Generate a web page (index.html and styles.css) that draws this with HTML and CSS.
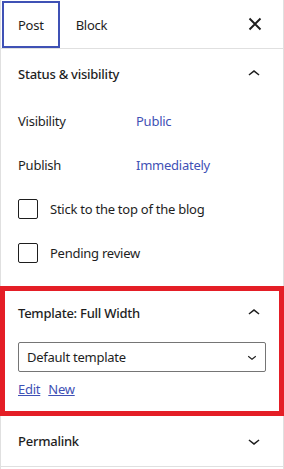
FILE: index.html
```
<!DOCTYPE html>
<html>
<head>
    <title>Post settings</title>
    <meta http-equiv="Content-Type" content="text/html; charset=utf-8"/>
    <link rel="stylesheet" href="styles.css">
</head>
<body>
<div id="sidebar">
    <div class="tabs">
        <button class="tab active">Post</button>
        <button class="tab">Block</button>
        <button class="close" aria-label="Close settings">
            <svg width="24" height="24" viewBox="0 0 24 24"><path d="M6.5 6.5l11 11M17.5 6.5l-11 11" stroke="#1e1e1e" stroke-width="1.9" fill="none"/></svg>
        </button>
    </div>

    <div class="panel">
        <div class="panelHeader">
            <span>Status &amp; visibility</span>
            <svg width="24" height="24" viewBox="0 0 24 24"><path d="M6.5 12.4L12 8l5.5 4.4-.9 1.2L12 10l-4.6 3.6-.9-1.2z"/></svg>
        </div>
        <div class="panelBody status">
            <div class="row">
                <span class="label">Visibility</span>
                <a class="value">Public</a>
            </div>
            <div class="row">
                <span class="label">Publish</span>
                <a class="value">Immediately</a>
            </div>
            <div class="row">
                <span class="checkbox"></span>
                <span>Stick to the top of the blog</span>
            </div>
            <div class="row">
                <span class="checkbox"></span>
                <span>Pending review</span>
            </div>
        </div>
    </div>

    <div class="panel template">
        <div class="panelHeader">
            <span>Template: Full Width</span>
            <svg width="24" height="24" viewBox="0 0 24 24"><path d="M6.5 12.4L12 8l5.5 4.4-.9 1.2L12 10l-4.6 3.6-.9-1.2z"/></svg>
        </div>
        <div class="panelBody">
            <div class="select">
                <span>Default template</span>
                <svg width="18" height="18" viewBox="0 0 24 24"><path d="M17.5 11.6L12 16l-5.5-4.4.9-1.2L12 14l4.6-3.6.9 1.2z"/></svg>
            </div>
            <div class="links">
                <a>Edit</a>
                <a>New</a>
            </div>
        </div>
        <div class="highlight"></div>
    </div>

    <div class="panel">
        <div class="panelHeader">
            <span>Permalink</span>
            <svg width="24" height="24" viewBox="0 0 24 24"><path d="M17.5 11.6L12 16l-5.5-4.4.9-1.2L12 14l4.6-3.6.9 1.2z"/></svg>
        </div>
    </div>
</div>
</body>
</html>
```

FILE: styles.css
```
body {
    margin: 0;
    font-family: "Noto Sans", sans-serif;
    font-size: 13px;
    letter-spacing: -0.25px;
    color: #1e1e1e;
    background-color: #fff;
}

#sidebar {
    width: 284px;
    height: 469px;
    box-sizing: border-box;
    border-left: 1px solid #e0e0e0;
    border-right: 1px solid #e0e0e0;
}

svg {
    fill: #1e1e1e;
    flex: none;
}

.tabs {
    display: flex;
    align-items: center;
    height: 48px;
    border-bottom: 1px solid #e0e0e0;
}

.tabs button {
    border: none;
    background: none;
    font: inherit;
    letter-spacing: inherit;
    color: inherit;
    padding: 0;
}

.tab {
    height: 47px;
    padding: 2px 16px 0 !important;
}

.tab.active {
    margin-left: 1px;
    box-shadow: inset 0 0 0 2px #3f51b5;
}

.close {
    margin-left: auto;
    margin-right: 16px;
    display: flex;
}

.panel {
    position: relative;
    border-bottom: 1px solid #e0e0e0;
}

.panelHeader {
    display: flex;
    align-items: center;
    justify-content: space-between;
    height: 50px;
    padding: 0 17px;
    font-weight: 500;
}

.panelBody {
    padding: 0 17px 12px;
}

.row {
    display: flex;
    align-items: center;
    height: 44px;
}

.label {
    width: 118px;
}

.value {
    color: #3f51b5;
}

.checkbox {
    width: 20px;
    height: 20px;
    box-sizing: border-box;
    border: 1.5px solid #1e1e1e;
    border-radius: 2px;
    margin-right: 12px;
}

.template .panelBody {
    padding-top: 4px;
    padding-bottom: 17px;
}

.select {
    display: flex;
    align-items: center;
    justify-content: space-between;
    height: 30px;
    box-sizing: border-box;
    border: 1px solid #757575;
    border-radius: 2px;
    padding: 0 4px 0 8px;
}

.links {
    display: flex;
    gap: 8px;
    margin-top: 8px;
    line-height: 18px;
}

.links a {
    color: #3f51b5;
    text-decoration: underline;
}

/* annotation frame drawn over the template panel */
.highlight {
    position: absolute;
    top: -2px;
    left: -1px;
    right: -1px;
    bottom: -1px;
    border: 5px solid #e41e26;
}
```
